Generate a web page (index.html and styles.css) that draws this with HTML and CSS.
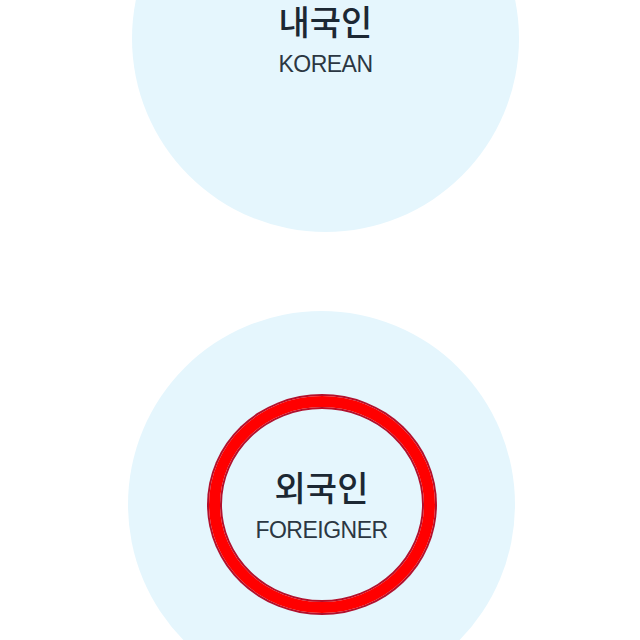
FILE: index.html
```
<!DOCTYPE html>
<html lang="ko">
<head>
  <meta charset="UTF-8">
  <meta name="viewport" content="width=device-width, initial-scale=1.0">
  <title>국적 선택</title>
  <link rel="stylesheet" href="styles.css">
</head>
<body>
  <main class="choices">
    <button class="choice choice-korean" type="button">
      <span class="label">
        <strong>내국인</strong>
        <span>KOREAN</span>
      </span>
    </button>
    <button class="choice choice-foreign selected" type="button">
      <span class="label">
        <strong>외국인</strong>
        <span>FOREIGNER</span>
      </span>
    </button>
  </main>
</body>
</html>
```

FILE: styles.css
```
/* General Styles */
html, body {
  margin: 0;
  height: 100%;
  overflow: hidden;
  background: #fff;
}

body {
  font-family: "Liberation Sans", Arial, "Noto Sans CJK KR", sans-serif;
  color: #1f2c38;
}

.choices {
  display: flex;
  flex-direction: column;
  gap: 79px;
  margin-top: -155px;
}

.choice {
  width: 387px;
  height: 387px;
  border: none;
  border-radius: 50%;
  background-color: #e5f6fd;
  display: flex;
  align-items: center;
  justify-content: center;
  padding: 0;
  cursor: pointer;
  font: inherit;
  color: inherit;
}

.choice-korean {
  margin-left: 132px;
}

.choice-foreign {
  margin-left: 128px;
}

.label {
  display: flex;
  flex-direction: column;
  align-items: center;
  box-sizing: border-box;
}

.label strong {
  font-family: "Noto Sans CJK KR", sans-serif;
  font-size: 34px;
  font-weight: 500;
  line-height: 40px;
  color: #1c2833;
}

.label span {
  font-size: 23px;
  line-height: 26px;
  letter-spacing: -0.5px;
  margin-top: 10px;
  color: #2b3742;
}

/* Selected ring */
.choice.selected .label {
  width: 226px;
  height: 217px;
  justify-content: center;
  border: 11px solid #ff0000;
  border-radius: 50%;
  box-shadow: 0 0 0 2px #b3102c, inset 0 0 0 2px #b3102c;
}
```
